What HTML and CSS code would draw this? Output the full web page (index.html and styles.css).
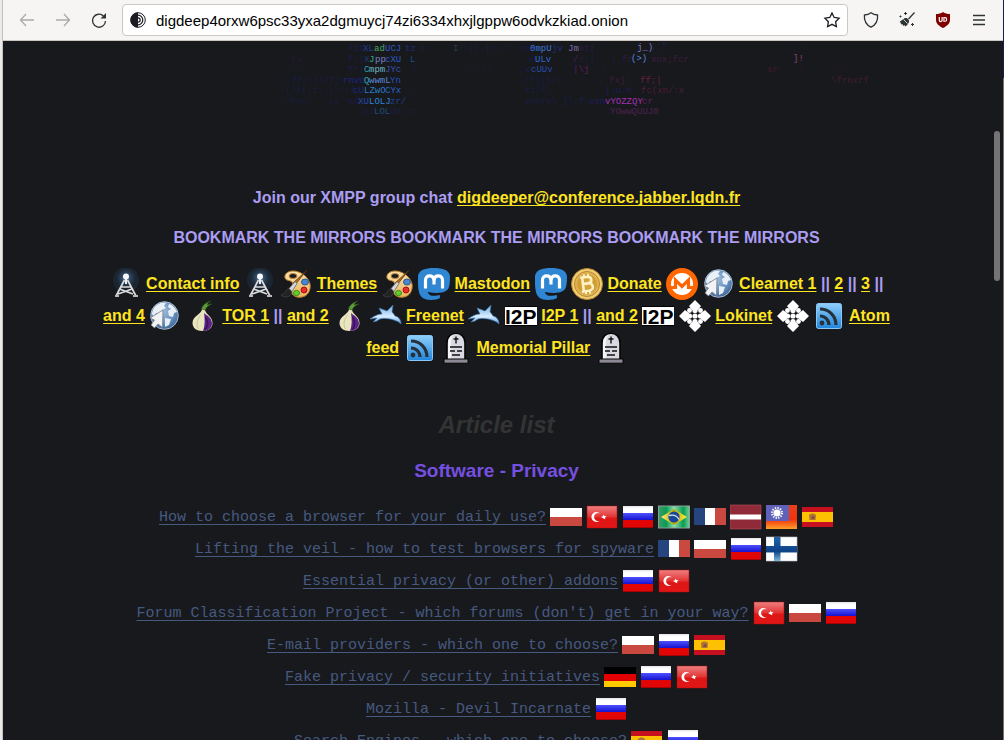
FILE: index.html
```html
<!DOCTYPE html>
<html lang="en">
<head>
<meta charset="utf-8">
<title>Dig Deeper</title>
<meta name="viewport" content="width=device-width, initial-scale=1">
<link rel="stylesheet" href="styles.css">
</head>
<body>
<svg class="defs" aria-hidden="true">
  <defs>
    <radialGradient id="glow"><stop offset="0" stop-color="#9cc8ee"/><stop offset=".35" stop-color="#46719b" stop-opacity=".8"/><stop offset=".75" stop-color="#2b4662" stop-opacity=".55"/><stop offset="1" stop-color="#1d2a38" stop-opacity=".3"/></radialGradient>
    <radialGradient id="globe" cx=".45" cy=".35" r=".65"><stop offset="0" stop-color="#9dbbdc"/><stop offset=".6" stop-color="#6a93c2"/><stop offset="1" stop-color="#3f669a"/></radialGradient>
    <linearGradient id="rss" x2="0" y2="1"><stop offset="0" stop-color="#8fd0fa"/><stop offset="1" stop-color="#2185dc"/></linearGradient>
    <radialGradient id="gold"><stop offset="0" stop-color="#d9a83e"/><stop offset=".7" stop-color="#cf9c33"/><stop offset="1" stop-color="#e9c468"/></radialGradient>
    <linearGradient id="wood" x2="0" y2="1"><stop offset="0" stop-color="#fbe3ac"/><stop offset="1" stop-color="#e9b45c"/></linearGradient>
    <linearGradient id="ru-blue" x2="0" y2="1"><stop offset="0" stop-color="#4c50ff"/><stop offset="1" stop-color="#1512cf"/></linearGradient>
    <linearGradient id="ru-white" x2="0" y2="1"><stop offset="0" stop-color="#e4e4e8"/><stop offset=".3" stop-color="#fff"/></linearGradient>
    <linearGradient id="tr-red" x2="0" y2="1"><stop offset="0" stop-color="#ee8080"/><stop offset=".5" stop-color="#e23333"/><stop offset=".55" stop-color="#dd1616"/><stop offset="1" stop-color="#e31515"/></linearGradient>
    <linearGradient id="br-green"><stop offset="0" stop-color="#3d9b70"/><stop offset=".25" stop-color="#0a9c50"/><stop offset=".5" stop-color="#8fdcae"/><stop offset=".8" stop-color="#0a9c50"/><stop offset="1" stop-color="#6fd09c"/></linearGradient>
    <linearGradient id="br-gold"><stop offset="0" stop-color="#fff27a"/><stop offset=".5" stop-color="#b9a600"/><stop offset="1" stop-color="#fff04a"/></linearGradient>
    <linearGradient id="tw-red" x2="0" y2="1"><stop offset="0" stop-color="#e8401c"/><stop offset=".6" stop-color="#f2330b"/><stop offset="1" stop-color="#ffa02a"/></linearGradient>
    <linearGradient id="fi-blue" x2="0" y2="1"><stop offset="0" stop-color="#2163a8"/><stop offset=".6" stop-color="#0e4287"/><stop offset="1" stop-color="#7db8d8"/></linearGradient>
    <linearGradient id="hare" x2="0" y2="1"><stop offset="0" stop-color="#6ea9e0"/><stop offset=".6" stop-color="#d8edff"/><stop offset="1" stop-color="#5a9bda"/></linearGradient>
  </defs>

  <symbol id="antenna" viewBox="0 0 32 32">
    <circle cx="16" cy="12" r="13" fill="#1f2f42" opacity=".55"/>
    <circle cx="16" cy="10" r="10" fill="url(#glow)" opacity=".7"/>
    <path d="M14.500 12 6 28M17.500 12 26 28M11 19h10M9.500 21 23 26M22 21 8 26" stroke="#dcdcdc" stroke-width="1.700" fill="none"/>
    <path d="M5 28h4M23 28h5" stroke="#b9b9b9" stroke-width="2"/>
    <path d="M16 10v6" stroke="#eee" stroke-width="2"/>
    <circle cx="16" cy="8.500" r="3" fill="#f4f8fb"/>
  </symbol>

  <symbol id="palette" viewBox="0 0 32 32">
    <path d="M13 3C8 3 4 6 5 10c1 3 5 2 7 4 2 3-1 6-1 9 1 5 6 7 11 6 6-1 9-7 8-13C28 8 20 3 13 3Z" fill="url(#wood)" stroke="#b87e2c"/>
    <ellipse cx="13" cy="8" rx="4" ry="2.500" fill="#1b1c1f" stroke="#c38a3a"/>
    <ellipse cx="25" cy="14" rx="3.500" ry="3" fill="#4b85cf" stroke="#285a9a"/>
    <circle cx="24" cy="22" r="3" fill="#ea2b2b" stroke="#a51313"/>
    <ellipse cx="16.500" cy="25" rx="3" ry="2.600" fill="#5fce2e" stroke="#338e16"/>
    <path d="M27 2 15 17l-2-2Z" fill="#b66b25" stroke="#54310f" stroke-width=".7"/>
    <path d="m15 13.500-6 7 3 3 5-8Z" fill="#d5d7da" stroke="#55585c" stroke-width=".7"/>
    <path d="M9 21c-4 0-3 5-8 6 2 3 10 3 11-3Z" fill="#222" stroke="#4b4b4b" stroke-width=".6"/>
  </symbol>

  <symbol id="mastodon" viewBox="0 0 32 32">
    <path d="M16 0C7 0 1 2 0 8c0 4-.3 11 1 16 1 5 5 8 12 8 4 0 7-1 9-2l-.2-3c-4 1-11 2-12-3C21 26 29 25 31 19c1-4 1-8 1-11C31 2 25 0 16 0Z" fill="#2f86d3"/>
    <path d="M7.500 20.500V12c0-5.500 8-5.500 8.500 0 .5-5.500 8.500-5.500 8.500 0v8.500" stroke="#fff" stroke-width="3.200" fill="none"/>
    <path d="M16 11v5.500" stroke="#fff" stroke-width="3.200"/>
  </symbol>

  <symbol id="bitcoin" viewBox="0 0 32 32">
    <circle cx="16" cy="16" r="15.500" fill="#f0cf78" stroke="#bd8827"/>
    <circle cx="16" cy="16" r="12.500" fill="url(#gold)" stroke="#b5822a"/>
    <g transform="rotate(-7 16 16)" fill="none" stroke="#fff1c4" stroke-width="2.600">
      <path d="M12 9v14M10 9h7c5 0 5 6.500 0 6.500h-5M17 15.500c6 0 6 7.500 0 7.500h-7"/>
      <path d="M14 6v3M18 6v3M14 23v3M18 23v3" stroke-width="2"/>
    </g>
  </symbol>

  <symbol id="monero" viewBox="0 0 32 32">
    <circle cx="16" cy="16" r="16" fill="#ff6600"/>
    <circle cx="16" cy="16" r="11" fill="#fff"/>
    <path d="M5 19.500h4.500V12l6.500 6.500L22.500 12v7.500H27" fill="none" stroke="#ff6600" stroke-width="3.200"/>
  </symbol>

  <symbol id="web" viewBox="0 0 32 32">
    <circle cx="15.500" cy="15.500" r="13.800" fill="url(#globe)" stroke="#a9bdd3"/>
    <path d="M5 8c3-4 7-6 12-5l-2 3 2 2-4 2-2 4-4-1-2 4-2-3c0-2 1-4 2-6ZM20 4c4 1 7 5 8 8l-3 1-1 4-4-1-1-5 3-2-3-2ZM16 18l6 1-2 6-4 2Z" fill="#eef3f8" opacity=".95"/>
    <path d="M14 10 1 18l4.500 2L2 25l3.500 3L9 24l4.500 3.500Z" fill="#f2f3f4" stroke="#777c84" stroke-width=".8"/>
  </symbol>

  <symbol id="onion" viewBox="0 0 32 32">
    <path d="M16 9c0 5-9.500 7-9.500 14 0 5 4 8 10 8s10-3 10-8c0-7-8-9-7.500-14Z" fill="#e9e5bf"/>
    <path d="M18 13c2 2 8 4.500 8 10.500 0 4.500-4 7.500-9 7.500 2-5 2-12 1-18Z" fill="#5b2484"/>
    <path d="M19.500 17c2.500 4 2.500 9-.5 13" fill="none" stroke="#3b1160" stroke-width="1.600"/>
    <path d="M14.500 15c-3 4-5 9-2 14" fill="none" stroke="#c2bc8e" stroke-width=".8"/>
    <path d="M15.500 9c1-4 4-6 9-8-3 2-3 3-3 4 2-1 3-1 4-1-4 2-6 4-6 6Z" fill="#5d9a38" stroke="#2c5b16" stroke-width=".7"/>
  </symbol>

  <symbol id="rabbit" viewBox="0 0 32 32">
    <path d="M0 19C4 16 8 14 12 14L9 8l8 3 6-6-1 7c1 1 2 2 3 4 4 1 6 4 6 8-3-3-7-4-11-5-6-1-10-1-13 2l-4 1 4-4c-3 0-4 1-7 1Z" fill="url(#hare)" stroke="#3877b4" stroke-width=".6"/>
  </symbol>

  <symbol id="i2p" viewBox="0 0 32 32">
    <rect y="6" width="32" height="20" fill="#000"/>
    <rect y="7" width="32" height="18" fill="#fff"/>
    <text x="0" y="24" font-family="Liberation Sans, Arial, sans-serif" font-size="21" font-weight="700" fill="#000">I2P</text>
  </symbol>

  <symbol id="loki" viewBox="0 0 32 32">
    <g fill="#fff">
      <path d="m16 0 6 6-3 4h-6l-3-4ZM16 32l6-6-3-4h-6l-3 4ZM0 16l6-6 4 3v6l-4 3ZM32 16l-6-6-4 3v6l4 3Z"/>
      <circle cx="16" cy="10.500" r="2.600"/><circle cx="10.500" cy="10.500" r="2.400"/><circle cx="21.500" cy="10.500" r="2.400"/>
      <circle cx="10.500" cy="16" r="2.600"/><circle cx="16" cy="16" r="2.600"/><circle cx="21.500" cy="16" r="2.600"/>
      <circle cx="16" cy="21.500" r="2.600"/><circle cx="10.500" cy="21.500" r="2.400"/><circle cx="21.500" cy="21.500" r="2.400"/>
    </g>
  </symbol>

  <symbol id="feed" viewBox="0 0 32 32">
    <rect x="3.500" y="3.500" width="25" height="25" rx="2" fill="url(#rss)" stroke="#8cc6f2"/>
    <g fill="none" stroke="#27313b" stroke-width="3.200"><path d="M7 9c9 0 16 7 16 16M7 16c5 0 9 4 9 9"/></g>
    <circle cx="9" cy="23" r="2.400" fill="#27313b"/>
  </symbol>

  <symbol id="grave" viewBox="0 0 32 32">
    <path d="M7 28V11c0-13 18-13 18 0v17Z" fill="#d9d9e3" stroke="#060607" stroke-width="1.600"/>
    <path d="M8 27V11C8 7 10 4 13 3c-2 3-2 6-2 9v15Z" fill="#f3f3f8"/>
    <rect x="4" y="27" width="24" height="4.200" fill="#8d8994" stroke="#060607"/>
    <path d="M16 4.500v7M13.500 7h5M10 15h12M10 19h5M17 19h5M12 23h8" stroke="#111" stroke-width="1.400" fill="none"/>
  </symbol>

  <symbol id="pl" viewBox="0 0 32 32"><path d="M0 7h32v9H0Z" fill="#fff"/><path d="M0 16h32v9H0Z" fill="#c9483f"/></symbol>
  <symbol id="tr" viewBox="0 0 32 32">
    <rect x="1" y="5" width="30" height="22" fill="url(#tr-red)" stroke="#a31212" stroke-width=".5"/>
    <path d="M14 12.500a5 5 0 1 0 0 7 4 4 0 1 1 0-7Z" fill="#fff"/>
    <path d="m15 16 2-.8.500-1.700 1 1.500 2 .2-1.400 1.300.2 1.800-1.800-.9Z" fill="#fff"/>
  </symbol>
  <symbol id="ru" viewBox="0 0 32 32">
    <path d="M1 5h30v8H1Z" fill="url(#ru-white)"/><path d="M1 12h30v7H1Z" fill="url(#ru-blue)"/><path d="M1 19h30v8H1Z" fill="#e20505"/><path d="M1 26h30v1H1Z" fill="#a80000"/>
  </symbol>
  <symbol id="br" viewBox="0 0 32 32">
    <rect x=".5" y="5" width="31" height="22" fill="url(#br-green)" stroke="#8d9f99"/>
    <path d="m3 16 13-8 13 8-13 8Z" fill="url(#br-gold)"/>
    <circle cx="16" cy="16" r="5.600" fill="#17479a"/><path d="M11 14.500c4-1 8 0 10 4" stroke="#d4e4f2" stroke-width="1.300" fill="none"/>
  </symbol>
  <symbol id="fr" viewBox="0 0 32 32"><path d="M0 7h11v17H0Z" fill="#26457e"/><path d="M11 7h10v17H11Z" fill="#fff"/><path d="M21 7h11v17H21Z" fill="#c9483f"/></symbol>
  <symbol id="lv" viewBox="0 0 32 32"><path d="M0 4h31v24H0Z" fill="#912a38" stroke="#b8525c" stroke-width=".6"/><path d="M0 13.500h31v5H0Z" fill="#fff"/></symbol>
  <symbol id="tw" viewBox="0 0 32 32">
    <path d="M0 4h31v24H0Z" fill="url(#tw-red)"/><path d="M0 4h23v16H0Z" fill="#5f62b8"/>
    <circle cx="11" cy="12" r="3.600" fill="#fff"/><circle cx="11" cy="12" r="5" fill="none" stroke="#fff" stroke-width="2" stroke-dasharray="1.300 1.300"/>
  </symbol>
  <symbol id="es" viewBox="0 0 32 32">
    <path d="M0 6h31v20H0Z" fill="#c60f1f"/><path d="M0 11h31v10H0Z" fill="#fdc101"/>
    <path d="M7 14c2-2 5-2 7 0l-.5 5h-6Z" fill="#ae7434"/><circle cx="11" cy="16.500" r="1.600" fill="#7d4a50"/>
  </symbol>
  <symbol id="fi" viewBox="0 0 32 32"><path d="M0 4h31v24H0Z" fill="#fdfdfd" stroke="#b9c4ce" stroke-width=".6"/><path d="M8 4h6.500v9H31v6.500H14.500V28H8v-8.500H0V13h8Z" fill="url(#fi-blue)"/></symbol>
  <symbol id="de" viewBox="0 0 32 32"><path d="M0 6h32v7H0Z" fill="#000"/><path d="M0 13h32v7H0Z" fill="#e30000"/><path d="M0 20h32v6H0Z" fill="#ffcb00"/></symbol>
</svg>

<div class="window">
  <header class="toolbar">
    <button class="tool tool--off" type="button" aria-label="Back"><svg viewBox="0 0 16 16"><path d="M15 8H1.500M7 2 1.500 8 7 14"/></svg></button>
    <button class="tool tool--off" type="button" aria-label="Forward"><svg viewBox="0 0 16 16"><path d="M1 8h13.500M9 2l5.500 6L9 14"/></svg></button>
    <button class="tool" type="button" aria-label="Reload"><svg viewBox="0 0 16 16"><path d="M12.500 4A6.500 6.500 0 1 0 14.500 9"/><path d="M15 1v5.500H9.500Z" fill="currentColor" stroke="none"/></svg></button>
    <div class="address">
      <svg class="address__site" viewBox="0 0 16 16" aria-hidden="true"><circle cx="8" cy="8" r="7.300" fill="#fff" stroke="#1c1b22"/><path d="M8 .5a7.500 7.500 0 0 0 0 15Z" fill="#1c1b22"/><path d="M8 3.200a4.800 4.800 0 0 1 0 9.600M8 5.800a2.200 2.200 0 0 1 0 4.400" fill="none" stroke="#1c1b22" stroke-width="1.200"/></svg>
      <input class="address__input" type="text" aria-label="Address" value="digdeep4orxw6psc33yxa2dgmuycj74zi6334xhxjlgppw6odvkzkiad.onion">
      <button class="address__star" type="button" aria-label="Bookmark this page"><svg viewBox="0 0 16 16"><path d="m8 1 2.200 4.500 4.900.7-3.500 3.500.8 4.900L8 12.300l-4.400 2.300.8-4.900L.9 6.200l4.900-.7Z"/></svg></button>
    </div>
    <button class="tool" type="button" aria-label="Security level"><svg viewBox="0 0 16 16"><path d="M8 .8c2 1.500 4.500 2.100 6.600 2.200C15 8.500 12.500 13 8 15.200 3.500 13 1 8.500 1.400 3 3.500 2.900 6 2.300 8 .8Z"/></svg></button>
    <button class="tool" type="button" aria-label="New identity"><svg viewBox="0 0 16 16"><path d="m15.500.5-6 6.500"/><path d="M6 6c2-.5 4.500 1.500 4 4-1 2-2 3.500-4 4.500L5.500 13 4 14l-.5-2-1.500.5-.3-2L.5 10C2 9 4 7 6 6Z" fill="currentColor" stroke="none"/><path d="m4.500 7.500 4 4" stroke="#f8f7f6" stroke-width=".8"/><path d="M6.500 0v3M5 1.500h3M1.500 3.500v2M.5 4.500h2M13.500 11v3M12 12.500h3" stroke-width="1"/></svg></button>
    <button class="tool" type="button" aria-label="Content blocker"><svg viewBox="0 0 16 16"><path d="M8 0c2 1.500 4.500 2 7 2v6c0 4-4 6.500-7 8-3-1.500-7-4-7-8V2c2.500 0 5-.5 7-2Z" fill="#800000" stroke="none"/><path d="M4.300 5v3.200a1.300 1.300 0 0 0 2.800 0V5" stroke="#fff" stroke-width="1.200"/><path d="M8.900 5.600v3.600h1a1.800 1.800 0 0 0 0-3.600Z" stroke="#fff" stroke-width="1.100"/></svg></button>
    <button class="tool" type="button" aria-label="Menu"><svg viewBox="0 0 16 16"><path d="M2 3.500h12M2 8h12M2 12.500h12"/></svg></button>
  </header>

  <div class="viewport">
    <main class="page">
      <svg class="banner" viewBox="0 1 987 84" role="img" aria-label="Coloured character art">
        <g class="banner__row">
          <text x="345" y="11" fill="#1c1c4e">/tt</text><text x="360" y="11" fill="#1f3f9a">XL</text><text x="371" y="11" fill="#49a866">ad</text><text x="382" y="11" fill="#2f55c0">UCJ</text><text x="402" y="11" fill="#1d2c7c">tz</text><text x="417" y="11" fill="#1b1c46">t</text><text x="450" y="11" fill="#24403f">I</text><text x="455" y="11" fill="#1c1b40">/:(|.|r /; |nc</text><text x="527" y="11" fill="#3c78dc">0mpU</text><text x="549" y="11" fill="#1f2c80">jv</text><text x="565" y="11" fill="#7f6ea6">Jm</text><text x="576" y="11" fill="#221d4e">xt|</text><text x="628" y="1" fill="#1f4670">#0%W?</text><text x="634" y="10" fill="#7e78c4">j_)</text><text x="648" y="9" fill="#1c254f">;:"</text><text x="794" y="5" fill="#27222b">:.</text>
        </g>
        <g class="banner__row">
          <text x="288" y="22" fill="#261a34">rx</text><text x="345" y="22" fill="#1b1c50">f;|</text><text x="361" y="22" fill="#1c3a70">X</text><text x="366" y="22" fill="#2bb07a">J</text><text x="372" y="22" fill="#7a80c4">pp</text><text x="382" y="22" fill="#2859c4">cXU</text><text x="407" y="22" fill="#1e4c8c">L</text><text x="525" y="22" fill="#1b1c50">x/</text><text x="532" y="22" fill="#2f69d2">ULv</text><text x="570" y="22" fill="#4e1a50">/</text><text x="576" y="22" fill="#231c40">c:|</text><text x="608" y="22" fill="#2a1c4c">:.fr</text><text x="628" y="21" fill="#5588dc">(&gt;)</text><text x="648" y="22" fill="#401a3e">xnx;fcr</text><text x="790" y="21" fill="#83447a">]!</text>
        </g>
        <g class="banner__row">
          <text x="287" y="32" fill="#201b32">::</text><text x="345" y="32" fill="#1b1c50">fr|</text><text x="361" y="32" fill="#2f9bac">C</text><text x="366" y="32" fill="#6abac4">mpm</text><text x="382" y="32" fill="#3450ac">JYc</text><text x="409" y="32" fill="#1b1c42">\</text><text x="463" y="32" fill="#1b1b34">:| |/</text><text x="516" y="32" fill="#1b1c4c">;x</text><text x="528" y="32" fill="#274cae">cUUv</text><text x="570" y="32" fill="#5c1c62">|\j</text><text x="588" y="32" fill="#1e1b3c">. (</text><text x="764" y="32" fill="#45172f">xr</text><text x="774" y="32" fill="#27171f">\</text><text x="795" y="32" fill="#32171f">\</text><text x="827" y="32" fill="#28181e">.\\</text>
        </g>
        <g class="banner__row">
          <text x="278" y="43" fill="#1b1c46">::ff/:||/fj</text><text x="340" y="43" fill="#1f218c">rnvU</text><text x="361" y="43" fill="#2ba8a4">Q</text><text x="366" y="43" fill="#5a88dc">wwmL</text><text x="387" y="43" fill="#254fba">Yn</text><text x="516" y="43" fill="#1a1b48">:/fjjj/::</text><text x="570" y="43" fill="#1d1b30">:::</text><text x="606" y="43" fill="#401a38">fxj</text><text x="622" y="43" fill="#291925">\</text><text x="637" y="43" fill="#68203e">ff;|</text><text x="799" y="43" fill="#21181f">. . .</text><text x="828" y="43" fill="#461b2e">\frnxrf</text>
        </g>
        <g class="banner__row">
          <text x="277" y="53" fill="#1b1c40">:(/f(:t: |\/:f</text><text x="350" y="53" fill="#1d267c">cU</text><text x="361" y="53" fill="#237fc2">LZwO</text><text x="382" y="53" fill="#2661c4">CYx</text><text x="400" y="53" fill="#1b1c3b">::</text><text x="522" y="53" fill="#1a1b42">tt/f:</text><text x="602" y="53" fill="#1e1c58">|:u:n</text><text x="638" y="53" fill="#4d1b36">fc(xn/:x</text><text x="700" y="53" fill="#26181e">:</text>
        </g>
        <g class="banner__row">
          <text x="281" y="64" fill="#1b1b3e">;fnn;</text><text x="325" y="64" fill="#1b1b3e">|x</text><text x="345" y="64" fill="#1b1c50">nc</text><text x="355" y="64" fill="#2648b4">XU</text><text x="366" y="64" fill="#2b87dc">LOLJ</text><text x="387" y="64" fill="#213f92">zr/</text><text x="522" y="64" fill="#1b1c48">xnnrx\ [\;f;</text><text x="586" y="64" fill="#1e1d5e">xxn</text><text x="602" y="64" fill="#a230b4">vYOZZQY</text><text x="639" y="64" fill="#572058">cr</text>
        </g>
        <g class="banner__row">
          <text x="355" y="74" fill="#1b1c3d">:xJ</text><text x="371" y="74" fill="#214d7c">LOL</text><text x="387" y="74" fill="#1c2148">Un:::</text><text x="598" y="74" fill="#21192c">::</text><text x="607" y="74" fill="#4e224e">YOwwQUUJ0</text>
        </g>
      </svg>

      <p class="lead">Join our XMPP group chat <a href="#chat">digdeeper@conference.jabber.lqdn.fr</a></p>
      <p class="lead">BOOKMARK THE MIRRORS BOOKMARK THE MIRRORS BOOKMARK THE MIRRORS</p>

      <nav class="links" aria-label="Site">
        <svg class="icon"><use href="#antenna"/></svg> <a href="#contact">Contact info</a> <svg class="icon"><use href="#antenna"/></svg>
        <svg class="icon"><use href="#palette"/></svg> <a href="#themes">Themes</a> <svg class="icon"><use href="#palette"/></svg>
        <svg class="icon"><use href="#mastodon"/></svg> <a href="#mastodon-link">Mastodon</a> <svg class="icon"><use href="#mastodon"/></svg>
        <svg class="icon"><use href="#bitcoin"/></svg> <a href="#donate">Donate</a> <svg class="icon"><use href="#monero"/></svg>
        <svg class="icon"><use href="#web"/></svg> <a href="#clearnet1">Clearnet 1</a> || <a href="#clearnet2">2</a> || <a href="#clearnet3">3</a> || <a href="#clearnet4">and 4</a> <svg class="icon"><use href="#web"/></svg>
        <svg class="icon"><use href="#onion"/></svg> <a href="#tor1">TOR 1</a> || <a href="#tor2">and 2</a> <svg class="icon"><use href="#onion"/></svg>
        <svg class="icon"><use href="#rabbit"/></svg> <a href="#freenet">Freenet</a> <svg class="icon"><use href="#rabbit"/></svg>
        <svg class="icon"><use href="#i2p"/></svg> <a href="#i2p1">I2P 1</a> || <a href="#i2p2">and 2</a> <svg class="icon"><use href="#i2p"/></svg>
        <svg class="icon"><use href="#loki"/></svg> <a href="#lokinet">Lokinet</a> <svg class="icon"><use href="#loki"/></svg>
        <svg class="icon"><use href="#feed"/></svg> <a href="#atom">Atom feed</a> <svg class="icon"><use href="#feed"/></svg>
        <svg class="icon"><use href="#grave"/></svg> <a href="#memorial">Memorial Pillar</a> <svg class="icon"><use href="#grave"/></svg>
      </nav>

      <h2 class="title">Article list</h2>
      <h3 class="section">Software - Privacy</h3>
      <ul class="articles">
        <li><a href="#a1">How to choose a browser for your daily use?</a><svg class="icon"><use href="#pl"/></svg><svg class="icon"><use href="#tr"/></svg><svg class="icon"><use href="#ru"/></svg><svg class="icon"><use href="#br"/></svg><svg class="icon"><use href="#fr"/></svg><svg class="icon"><use href="#lv"/></svg><svg class="icon"><use href="#tw"/></svg><svg class="icon"><use href="#es"/></svg></li>
        <li><a href="#a2">Lifting the veil - how to test browsers for spyware</a><svg class="icon"><use href="#fr"/></svg><svg class="icon"><use href="#pl"/></svg><svg class="icon"><use href="#ru"/></svg><svg class="icon"><use href="#fi"/></svg></li>
        <li><a href="#a3">Essential privacy (or other) addons</a><svg class="icon"><use href="#ru"/></svg><svg class="icon"><use href="#tr"/></svg></li>
        <li><a href="#a4">Forum Classification Project - which forums (don't) get in your way?</a><svg class="icon"><use href="#tr"/></svg><svg class="icon"><use href="#pl"/></svg><svg class="icon"><use href="#ru"/></svg></li>
        <li><a href="#a5">E-mail providers - which one to choose?</a><svg class="icon"><use href="#pl"/></svg><svg class="icon"><use href="#ru"/></svg><svg class="icon"><use href="#es"/></svg></li>
        <li><a href="#a6">Fake privacy / security initiatives</a><svg class="icon"><use href="#de"/></svg><svg class="icon"><use href="#ru"/></svg><svg class="icon"><use href="#tr"/></svg></li>
        <li><a href="#a7">Mozilla - Devil Incarnate</a><svg class="icon"><use href="#ru"/></svg></li>
        <li><a href="#a8">Search Engines - which one to choose?</a><svg class="icon"><use href="#es"/></svg><svg class="icon"><use href="#ru"/></svg></li>
      </ul>
    </main>
    <div class="scrollbar"><div class="scrollbar__thumb"></div></div>
  </div>
</div>
</body>
</html>
```

FILE: styles.css
```css
* {
  box-sizing: border-box;
}

body {
  margin: 0;
  height: 100vh;
  overflow: hidden;
  display: flex;
  padding-left: 2px;
  padding-right: 1px;
  background: linear-gradient(#14204c 78px, #77746f 78px) right / 1px 100% no-repeat #eceae8;
  font-family: "Liberation Sans", Arial, sans-serif;
  font-size: 16px;
}

.defs {
  position: absolute;
  width: 0;
  height: 0;
}

.window {
  flex: 1;
  min-width: 0;
  display: flex;
  flex-direction: column;
  border-left: 1px solid #c9c2bb;
  background: #18191d;
}

.toolbar {
  flex: none;
  display: flex;
  align-items: center;
  gap: 4px;
  padding: 4px 8px;
  background: #f6f5f4;
  border-bottom: 1px solid #cdc7c2;
}

.tool {
  flex: none;
  width: 32px;
  height: 32px;
  padding: 8px;
  border: 0;
  background: none;
  color: #2e3436;
}

.tool--off {
  color: #a9aaa9;
}

.tool svg,
.address svg {
  display: block;
  width: 16px;
  height: 16px;
  overflow: visible;
}

.tool svg,
.address__star svg {
  fill: none;
  stroke: currentColor;
  stroke-width: 1.3;
}

.address {
  flex: 1;
  min-width: 0;
  height: 32px;
  margin: 0 3px;
  padding: 0 7px;
  display: flex;
  align-items: center;
  border: 1px solid #cdc7c2;
  border-radius: 4px;
  background: #fff;
}

.address__input {
  flex: 1;
  min-width: 0;
  padding: 0 10px;
  border: 0;
  outline: 0;
  background: none;
  color: #000;
  font: 15px "Liberation Sans", Arial, sans-serif;
}

.address__star {
  padding: 0;
  border: 0;
  background: none;
  color: #1c1b22;
}

.viewport {
  flex: 1;
  min-height: 0;
  display: flex;
  overflow: hidden;
}

.page {
  flex: 1;
  min-width: 0;
  text-align: center;
}

.banner {
  display: block;
  width: 100%;
  margin-bottom: 61px;
}

.banner__row {
  font: 9px "Liberation Mono", monospace;
}

.lead {
  margin: 0 0 16px;
  color: #ab9df2;
  font-weight: 700;
  line-height: 24px;
}

.lead a,
.links a {
  color: #ffe51f;
  text-decoration: underline 1px;
  text-decoration-skip-ink: none;
  text-underline-offset: 2px;
}

.links {
  max-width: 800px;
  margin: 18px auto 0;
  color: #ab9df2;
  font-weight: 700;
  line-height: 20px;
}

.icon {
  flex: none;
  width: 32px;
  height: 32px;
  vertical-align: -11px;
}

.title {
  margin: 45px 0 18px;
  color: #333;
  font-size: 24px;
  font-style: italic;
  line-height: 32px;
}

.section {
  margin: 0;
  color: #7550e0;
  font-size: 19px;
  line-height: 24px;
}

.articles {
  margin: 18px 0 0;
  padding: 0;
  list-style: none;
}

.articles li {
  display: flex;
  justify-content: center;
  align-items: center;
  gap: 4px;
}

.articles a {
  color: #465a80;
  font: 15px "Liberation Mono", "Courier New", monospace;
  text-decoration: underline 1px;
  text-decoration-skip-ink: none;
  text-underline-offset: 3px;
}

.scrollbar {
  flex: none;
  width: 13px;
  padding: 90px 3px 0 4px;
}

.scrollbar__thumb {
  width: 6px;
  height: 150px;
  border-radius: 3px;
  background: #747474;
}
```
